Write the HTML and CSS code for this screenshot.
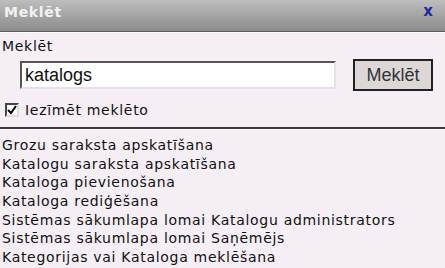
FILE: index.html
```html
<!DOCTYPE html>
<html lang="lv">
<head>
    <meta charset="UTF-8">
    <title>Meklēt</title>
    <link rel="stylesheet" href="styles.css">
</head>
<body>
    <div class="dialog">
        <div class="titlebar">
            <span class="title">Meklēt</span>
            <span class="close">x</span>
        </div>
        <form class="search-form">
            <label for="query" class="field-label">Meklēt</label>
            <div class="search-row">
                <input type="text" id="query" value="katalogs">
                <button type="button">Meklēt</button>
            </div>
            <label class="check-row">
                <span class="checkbox">
                    <svg width="10" height="10" viewBox="0 0 10 10"><path d="M1 5 L4 8 L9 1" fill="none" stroke="#000" stroke-width="2"/></svg>
                </span>
                <span>Iezīmēt meklēto</span>
            </label>
        </form>
        <ul class="results">
            <li>Grozu saraksta apskatīšana</li>
            <li>Katalogu saraksta apskatīšana</li>
            <li>Kataloga pievienošana</li>
            <li>Kataloga rediģēšana</li>
            <li>Sistēmas sākumlapa lomai Katalogu administrators</li>
            <li>Sistēmas sākumlapa lomai Saņēmējs</li>
            <li>Kategorijas vai Kataloga meklēšana</li>
        </ul>
    </div>
</body>
</html>
```

FILE: styles.css
```css
body {
    margin: 0;
    font-family: "DejaVu Sans", Verdana, sans-serif;
    font-size: 14px;
    letter-spacing: 0.7px;
    color: #111;
    background-color: #f5eef5;
}
.dialog {
    width: 445px;
    height: 268px;
    overflow: hidden;
    background-color: #f5eef5;
}
.titlebar {
    height: 32px;
    display: flex;
    justify-content: space-between;
    align-items: flex-start;
    padding: 0 12px 0 4px;
    background: linear-gradient(#bdbdbd, #8c8c8c);
    border-bottom: 1px solid #5c5c5c;
    box-shadow: 0 1px 0 #fff;
    box-sizing: border-box;
}
.title {
    margin-top: 4px;
    font-weight: bold;
    color: #f2f2f2;
}
.close {
    margin-top: 2px;
    font-size: 15px;
    font-weight: bold;
    letter-spacing: 0;
    color: #1c2c9c;
}
.search-form {
    padding: 6px 0 0 2px;
    border-bottom: 2px solid #3a3a3a;
    height: 97px;
    box-sizing: border-box;
    box-shadow: 0 1px 0 #fff;
}
.field-label {
    display: block;
    line-height: 17px;
}
.search-row {
    display: flex;
    align-items: center;
    margin: 4px 0 0 18px;
}
.search-row input {
    width: 316px;
    height: 28px;
    box-sizing: border-box;
    padding: 0 3px;
    border: 2px solid;
    border-color: #555 #e4e4e4 #e4e4e4 #555;
    background: #fff;
    font-family: "Liberation Sans", Arial, sans-serif;
    font-size: 18px;
    letter-spacing: 0;
    color: #111;
}
.search-row button {
    margin-left: 17px;
    width: 80px;
    height: 32px;
    border: 2px solid #222;
    background: #dcd8d8;
    font-family: "Liberation Sans", Arial, sans-serif;
    font-size: 18px;
    letter-spacing: 0;
    color: #333;
    padding: 0;
}
.check-row {
    display: flex;
    align-items: center;
    margin-top: 11px;
    margin-left: 3px;
}
.checkbox {
    width: 14px;
    height: 14px;
    box-sizing: border-box;
    margin-right: 6px;
    border: 2px solid;
    border-color: #444 #ddd #ddd #444;
    background: #fff;
    display: flex;
    align-items: center;
    justify-content: center;
}
.results {
    list-style: none;
    margin: 0;
    padding: 7px 0 0 2px;
}
.results li {
    line-height: 18.67px;
    white-space: nowrap;
}
```
